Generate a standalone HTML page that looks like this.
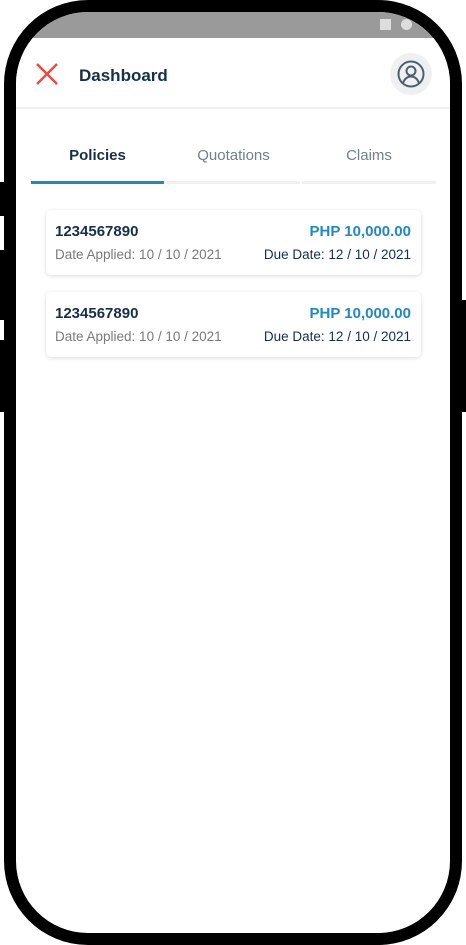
<!DOCTYPE html>
<html><head><meta charset="utf-8"><style>
*{margin:0;padding:0;box-sizing:border-box}
body{width:466px;height:945px;background:#fff;position:relative;overflow:hidden;font-family:"Liberation Sans",Roboto,sans-serif}
.btn{position:absolute;background:#000;width:5px}
.frame{position:absolute;left:4px;top:0;width:458px;height:945px;background:#000;border-radius:84px}
.screen{position:absolute;left:16px;top:12px;width:434px;height:921px;background:#fff;border-radius:72px;overflow:hidden}
.status{position:absolute;left:0;top:0;width:434px;height:26px;background:#9a9a9a}
.hdr{position:absolute;left:0;top:26px;width:434px;height:71px;background:#fff;border-bottom:2px solid #f0f0f0}
.title{position:absolute;left:63px;top:28px;font-size:17px;font-weight:bold;color:#14304a}
.tab{position:absolute;top:135px;font-size:15px;color:#6d8191;text-align:center}
.bar{position:absolute;top:169px;height:3px;background:#f0f0f0}
.card{position:absolute;left:30px;width:375px;height:65px;background:#fff;border-radius:5px;box-shadow:0 1px 4px rgba(0,0,0,.14)}
.n{position:absolute;left:9px;top:13px;font-size:15px;font-weight:bold;color:#14304a}
.p{position:absolute;right:10px;top:13px;font-size:15px;font-weight:bold;color:#1f8ac0}
.d{position:absolute;left:9px;top:37px;font-size:13.5px;color:#7a7a7a}
.u{position:absolute;right:10px;top:37px;font-size:13.5px;color:#14304a}
</style></head><body>
<div class="btn" style="left:0;top:182px;height:34px"></div>
<div class="btn" style="left:0;top:250px;height:70px"></div>
<div class="btn" style="left:0;top:340px;height:72px"></div>
<div class="btn" style="left:461px;top:300px;height:112px"></div>
<div class="frame"></div>
<div class="screen">
<div class="status"><div style="position:absolute;left:364px;top:7px;width:11px;height:11px;background:#ddd"></div><div style="position:absolute;left:385px;top:7px;width:11px;height:11px;background:#ddd;border-radius:50%"></div></div>
<div class="hdr">
<svg style="position:absolute;left:19px;top:24px" width="24" height="24" viewBox="0 0 24 24"><path d="M2 2L22 22M22 2L2 22" stroke="#f0483a" stroke-width="2.4"/></svg>
<div class="title">Dashboard</div>
<div style="position:absolute;left:374px;top:15px;width:42px;height:42px;border-radius:50%;background:#eef0f1"></div>
<svg style="position:absolute;left:381px;top:22px" width="28" height="28" viewBox="0 0 28 28" fill="none" stroke="#4c6070" stroke-width="2"><circle cx="14" cy="14" r="12.5"/><circle cx="14" cy="11" r="4.5"/><path d="M6 23c2-5 5-6.5 8-6.5s6 1.5 8 6.5"/></svg>
</div>
<div class="tab" style="left:15px;width:133px;color:#14304a;font-weight:bold">Policies</div>
<div class="tab" style="left:151px;width:133px">Quotations</div>
<div class="tab" style="left:286px;width:134px">Claims</div>
<div class="bar" style="left:15px;width:133px;background:#1f8ac0"></div>
<div class="bar" style="left:151px;width:133px"></div>
<div class="bar" style="left:286px;width:134px"></div>
<div class="card" style="top:198px"><div class="n">1234567890</div><div class="p">PHP 10,000.00</div><div class="d">Date Applied: 10 / 10 / 2021</div><div class="u">Due Date: 12 / 10 / 2021</div></div>
<div class="card" style="top:280px"><div class="n">1234567890</div><div class="p">PHP 10,000.00</div><div class="d">Date Applied: 10 / 10 / 2021</div><div class="u">Due Date: 12 / 10 / 2021</div></div>
</div>
</body></html>
